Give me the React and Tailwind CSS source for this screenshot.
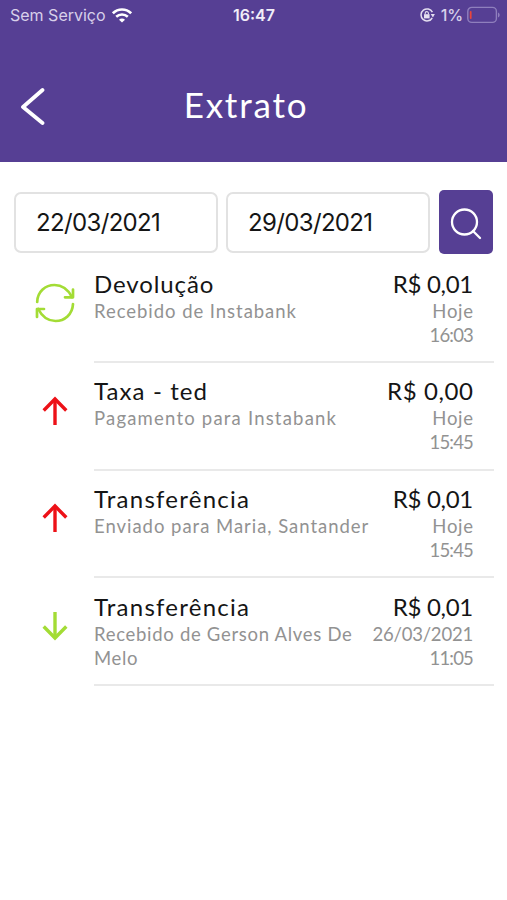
const transactions = [
  {
    id: 1,
    type: 'refund',
    title: 'Devolução',
    titleClass: 'tracking-[0.9px]',
    description: 'Recebido de Instabank',
    descriptionClass: 'tracking-[0.95px]',
    amount: 'R$ 0,01',
    amountClass: 'tracking-[-0.3px]',
    date: 'Hoje',
    dateClass: 'tracking-[0.7px] -mr-[0.7px]',
    time: '16:03',
  },
  {
    id: 2,
    type: 'out',
    title: 'Taxa - ted',
    titleClass: 'tracking-[1.1px]',
    description: 'Pagamento para Instabank',
    descriptionClass: 'tracking-[1.2px]',
    amount: 'R$ 0,00',
    amountClass: 'tracking-[0.6px] -mr-[0.6px]',
    date: 'Hoje',
    dateClass: 'tracking-[0.7px] -mr-[0.7px]',
    time: '15:45',
  },
  {
    id: 3,
    type: 'out',
    title: 'Transferência',
    titleClass: 'tracking-[1.25px]',
    description: 'Enviado para Maria, Santander',
    descriptionClass: 'tracking-[0.97px]',
    amount: 'R$ 0,01',
    amountClass: 'tracking-[-0.3px]',
    date: 'Hoje',
    dateClass: 'tracking-[0.7px] -mr-[0.7px]',
    time: '15:45',
  },
  {
    id: 4,
    type: 'in',
    title: 'Transferência',
    titleClass: 'tracking-[1.25px]',
    description: 'Recebido de Gerson Alves De Melo',
    descriptionClass: 'tracking-[0.7px]',
    amount: 'R$ 0,01',
    amountClass: 'tracking-[-0.3px]',
    date: '26/03/2021',
    dateClass: 'tracking-[-0.2px]',
    time: '11:05',
  },
]

function StatusBar() {
  return (
    <div className="grid grid-cols-3 items-center h-[30px] pl-[10px] pr-[7px] font-['Inter',sans-serif] text-[16px] leading-[30px] text-[#d8d0ea]">
      <div className="flex items-center gap-[6px] whitespace-nowrap">
        <span>Sem Serviço</span>
        <svg width="20" height="15" viewBox="0 0 20 15" fill="none" stroke="#fff" strokeWidth="2.6">
          <path d="M.9 5.300C6 .3 14 .3 19.100 5.300" />
          <path d="M4.200 8.700C7.500 5.700 12.500 5.700 15.800 8.700" />
          <path d="M10 14.600 7 11.700C8.700 10.200 11.300 10.200 13 11.700Z" fill="#fff" stroke="none" />
        </svg>
      </div>
      <span className="text-center font-semibold text-[#f1edf8] pr-[2px]">16:47</span>
      <div className="flex items-center justify-end">
        <svg width="15" height="14" viewBox="0 0 15 14" fill="none" stroke="#e4def0" strokeWidth="1.500">
          <path d="M12.400 4.200A6 6 0 1 0 12.200 10" />
          <path d="M10.700 6h4.200l-2 3.400Z" fill="#e4def0" stroke="none" />
          <rect x="4" y="6.200" width="5.600" height="4.200" fill="#e4def0" stroke="none" />
          <path d="M5.200 6.300V5.200a1.600 1.600 0 0 1 3.200 0v1.100" strokeWidth="1.100" />
        </svg>
        <span className="ml-[6px] font-medium tracking-[-0.1px]">1%</span>
        <svg className="ml-[4px] -mt-[1px]" width="33" height="18" viewBox="0 0 33 18" fill="none">
          <rect x="0.800" y="1.400" width="28.600" height="15" rx="4" stroke="#8f7fbd" strokeWidth="1.400" />
          <path d="M31 6.500c2.200.8 2.200 4.200 0 5Z" fill="#8f7fbd" />
          <rect x="2.800" y="5" width="1.800" height="8" rx=".8" fill="#e8453c" />
        </svg>
      </div>
    </div>
  )
}

function Header() {
  return (
    <header className="h-[162px] bg-[#563f94]">
      <StatusBar />
      <div className="grid grid-cols-[60px_1fr_60px] items-center mt-[44px] h-[64px] pl-[1px]">
        <button className="pl-[18px]">
          <svg width="28" height="38" viewBox="0 0 28 38" fill="none" stroke="#fff" strokeWidth="3.800" strokeLinecap="round" strokeLinejoin="round">
            <path d="M23.500 3 4 20 23.500 36" />
          </svg>
        </button>
        <h1 className="text-center text-[35px] leading-[60px] tracking-[1.800px] pr-[16px] pb-[4px] text-white">Extrato</h1>
      </div>
    </header>
  )
}

function DateField({ value }) {
  return (
    <div className="flex items-center w-[204px] h-[61px] pl-[20px] pt-[1px] rounded-[7px] border-2 border-[#e2e2e2] font-['Inter',sans-serif] text-[24px] tracking-[-0.650px] text-[#151515]">
      {value}
    </div>
  )
}

function TransactionIcon({ type }) {
  if (type === 'refund') {
    return (
      <svg width="40" height="40" viewBox="0 0 40 40" fill="none" stroke="#a3dc35" strokeWidth="2.700" strokeLinecap="round" strokeLinejoin="round">
        <path d="M2.200 19C2.500 8.500 10.500 2 19.500 2 27 2 33 6.500 37 14" />
        <path d="M30 14.300h8V6.600" />
        <path d="M38 21C37.500 31.500 29.500 38 20.500 38 13 38 7 33.500 3.200 26" />
        <path d="M9 26H2v8" />
      </svg>
    )
  }

  if (type === 'in') {
    return (
      <svg width="26" height="30" viewBox="0 0 26 30" fill="none" stroke="#a3dc35" strokeWidth="3.400">
        <path d="M13 1v26" />
        <path d="M1.700 15.500 13 27 24.300 15.500" />
      </svg>
    )
  }

  return (
    <svg width="26" height="30" viewBox="0 0 26 30" fill="none" stroke="#ed1117" strokeWidth="3.400">
      <path d="M13 29V3" />
      <path d="M1.700 14.500 13 3 24.300 14.500" />
    </svg>
  )
}

function TransactionRow({ item }) {
  return (
    <li className="flex h-[107.75px] pr-[13px]">
      <div className="flex justify-center shrink-0 w-[94px] pl-[16px] pb-[12px] items-center">
        <TransactionIcon type={item.type} />
      </div>
      <div className="flex flex-1 justify-between pt-[13.500px] pr-[21px] border-b-2 border-[#e9e9e9]">
        <div className="w-[278px] shrink-0">
          <h2 className={`text-[24px] leading-[30px] whitespace-nowrap text-[#151515] ${item.titleClass}`}>{item.title}</h2>
          <p className={`text-[18.500px] leading-[24px] text-[#929292] ${item.descriptionClass}`}>{item.description}</p>
        </div>
        <div className="flex w-[101px] flex-col items-end whitespace-nowrap text-[18.500px] leading-[24px] text-[#929292]">
          <span className={`text-[24px] leading-[30px] text-[#151515] ${item.amountClass}`}>{item.amount}</span>
          <span className={item.dateClass}>{item.date}</span>
          <span className="tracking-[-0.8px]">{item.time}</span>
        </div>
      </div>
    </li>
  )
}

function App() {
  return (
    <div className="w-full min-h-[900px] bg-white font-['Lato',sans-serif]">
      <Header />
      <div className="flex items-end pt-[28px] pl-[14px]">
        <div className="mb-[1px]">
          <DateField value="22/03/2021" />
        </div>
        <div className="ml-[8px] mb-[1px]">
          <DateField value="29/03/2021" />
        </div>
        <button className="flex items-center justify-center ml-[9px] w-[54px] h-[64px] pt-[3px] rounded-[5px] bg-[#563f94]">
          <svg width="32" height="32" viewBox="0 0 32 32" fill="none" stroke="#fff" strokeWidth="2.300" strokeLinecap="round">
            <circle cx="14.500" cy="14" r="12.500" />
            <path d="M23 23 30 30" />
          </svg>
        </button>
      </div>
      <ul className="mt-[1px]">
        {transactions.map((item) => (
          <TransactionRow key={item.id} item={item} />
        ))}
      </ul>
    </div>
  )
}

export default App
